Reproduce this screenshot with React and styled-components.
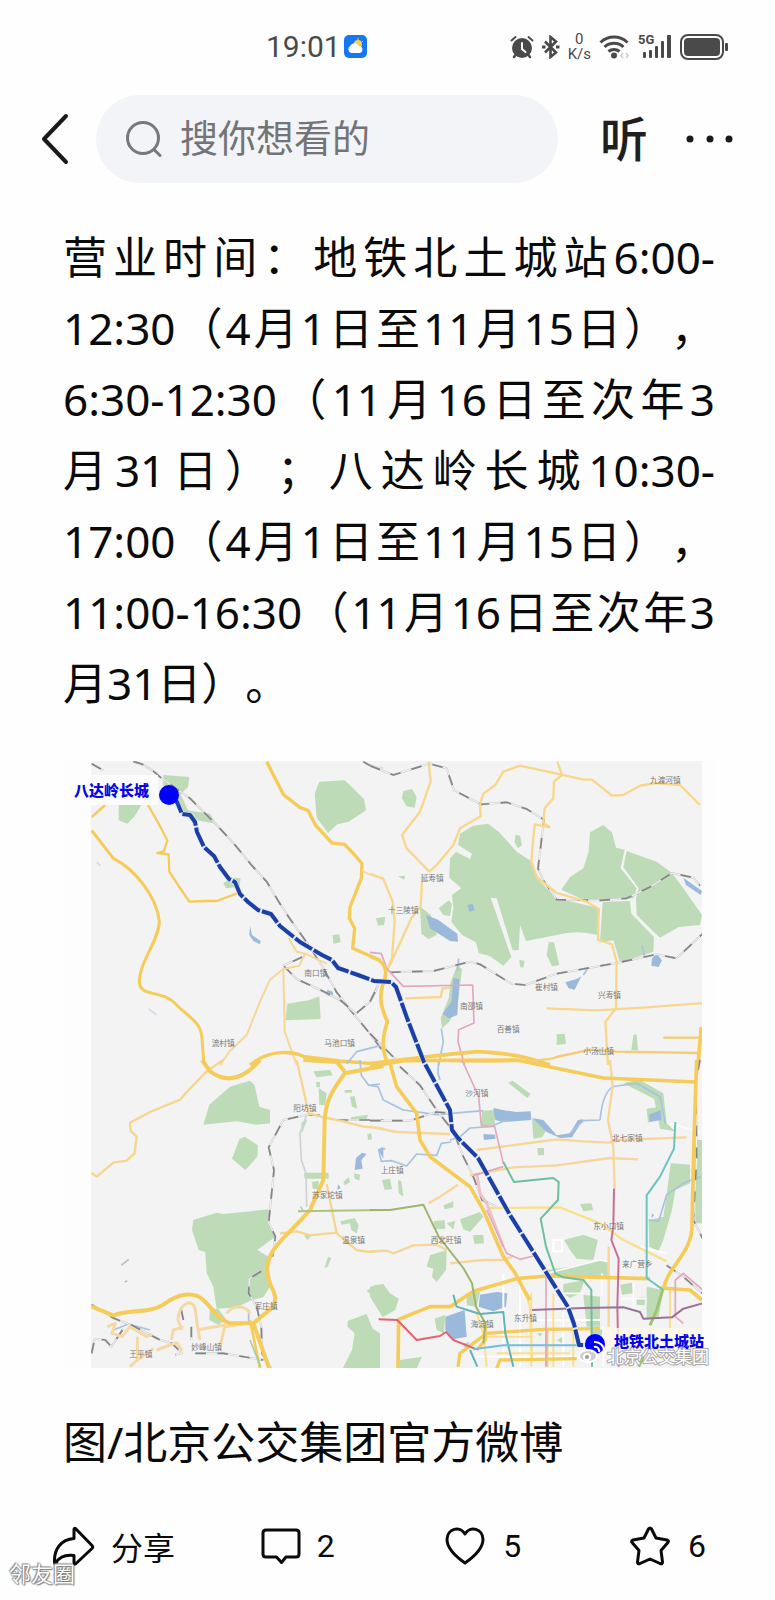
import React from "react";
import styled, { createGlobalStyle } from "styled-components";

const GlobalStyle = createGlobalStyle`
* {
  margin: 0;
  padding: 0;
  box-sizing: border-box;
}

body {
  background: #fefefe;
  color: #0a0a0a;
  font-family: Roboto, "Noto Sans CJK SC", sans-serif;
}

button {
  border: none;
  background: none;
  color: inherit;
  font-family: inherit;
  cursor: pointer;
}
`;

const Page = styled.div`
  position: relative;
  min-height: 1600px;
`;

const StatusBar = styled.div`
  display: flex;
  align-items: center;
  height: 95px;
  padding: 0 46px 2px 266px;
  color: #4a4a4a;
`;

const Clock = styled.span`
  font-size: 30px;
  line-height: 32px;
  margin-right: 3px;
`;

const StatusIcons = styled.div`
  display: flex;
  align-items: center;
  gap: 8px;
  margin-left: auto;
`;

const Speed = styled.div`
  font-size: 15px;
  line-height: 15px;
  text-align: center;
`;

const Header = styled.header`
  display: flex;
  align-items: center;
  padding: 0 41px 0 32px;
`;

const IconButton = styled.button`
  display: flex;
  align-items: center;
  justify-content: center;
  height: 88px;
`;

const BackButton = styled(IconButton)`
  width: 44px;
`;

const ListenButton = styled(IconButton)`
  width: 48px;
  margin-left: 42px;
  padding-bottom: 6px;
  font-size: 48px;
  font-weight: 500;
  color: #1f1f1f;
`;

const MoreButton = styled(IconButton)`
  width: 48px;
  margin-left: 38px;
`;

const SearchBox = styled.label`
  display: flex;
  align-items: center;
  flex: 1;
  min-width: 0;
  height: 88px;
  margin-left: 20px;
  padding: 0 30px;
  gap: 18px;
  border-radius: 44px;
  background: #f3f4f7;
`;

const SearchInput = styled.input`
  flex: 1;
  min-width: 0;
  height: 60px;
  border: none;
  outline: none;
  background: none;
  font-family: inherit;
  font-size: 38px;
  color: #1f1f1f;

  &::placeholder {
    color: #737477;
    opacity: 1;
  }
`;

const Article = styled.article`
  padding: 39px 60px 0 63px;
  font-family: "Noto Sans", "Noto Sans CJK SC", sans-serif;
  font-size: 44px;
  line-height: 71px;
  text-spacing-trim: space-all;
`;

const Line = styled.span`
  display: block;
  white-space: nowrap;
  text-align: justify;
  text-align-last: ${(props) => (props.$last ? "left" : "justify")};
`;

const Figure = styled.figure`
  margin-top: 42px;
`;

const MapSvg = styled.svg`
  display: block;
  width: 100%;
  height: auto;
`;

const Caption = styled.figcaption`
  margin-top: 38px;
`;

const ActionBar = styled.footer`
  display: grid;
  grid-template-columns: 210fr 185fr 185fr 75fr;
  align-items: center;
  padding: 37px 69px 0 51px;
`;

const ActionButton = styled.button`
  display: flex;
  align-items: center;
  gap: ${(props) => props.$gap || 16}px;
  height: 62px;
  font-size: 32px;
  white-space: nowrap;
`;

const Watermark = styled.span`
  position: absolute;
  left: 9px;
  bottom: 10px;
  font-size: 22px;
  line-height: 30px;
  color: #fff;
  text-shadow: 0 0 1px #666, 0 0 2px #777, 1px 1px 1px #888, -1px -1px 1px #aaa;
`;

const lines = [
  "营业时间：地铁北土城站6:00-",
  "12:30（4月1日至11月15日），",
  "6:30-12:30（11月16日至次年3",
  "月31日）；八达岭长城10:30-",
  "17:00（4月1日至11月15日），",
  "11:00-16:30（11月16日至次年3",
  "月31日）。",
];

function WeatherIcon() {
  return (
    <svg width="23" height="23" viewBox="0 0 23 23">
      <rect width="23" height="23" rx="5" fill="#1677f3" />
      <circle cx="14" cy="9" r="4" fill="#fbd04a" />
      <path d="M14 3v2M19 6l-1 1" stroke="#fbd04a" />
      <path d="M7 18a4 4 0 0 1-1-7 5 5 0 0 1 9 0 3.600 3.600 0 0 1 1 7z" fill="#fff" />
    </svg>
  );
}

function AlarmIcon() {
  return (
    <svg width="24" height="24" viewBox="0 0 24 24" fill="none" stroke="#4a4a4a" strokeLinecap="round">
      <circle cx="12" cy="13" r="10" fill="#4a4a4a" stroke="none" />
      <path d="M1.500 5.500l4-3.500M22.500 5.500l-4-3.500" strokeWidth="2" />
      <path d="M5.500 20l-1.500 2M18.500 20l1.500 2" strokeWidth="2.500" />
      <path d="M12 8v6l3.500 3" stroke="#fff" strokeWidth="2" />
    </svg>
  );
}

function BluetoothIcon() {
  return (
    <svg width="18" height="24" viewBox="0 0 18 24" fill="none" stroke="#4a4a4a" strokeWidth="2.600">
      <path d="M3 6.500l11 11-5.500 4.500V2L14 6.500l-11 11" />
      <path d="M0 12h3.500M14 12h3.500" strokeWidth="3" />
    </svg>
  );
}

function WifiIcon() {
  return (
    <svg width="31" height="24" viewBox="0 0 31 24" fill="none" stroke="#4a4a4a" strokeWidth="3">
      <path d="M1.500 7.500a19.500 19.500 0 0 1 27 0" />
      <path d="M5.500 12a14 14 0 0 1 19 0" />
      <path d="M9.500 16.500a8.500 8.500 0 0 1 11 0" />
      <circle cx="15" cy="20.500" r="3" fill="#4a4a4a" stroke="none" />
      <path d="M24 18l-2 2.500 2 2.500M27 18l2 2.500-2 2.500" stroke="#ccc" strokeWidth="1.500" />
    </svg>
  );
}

function SignalIcon() {
  return (
    <svg width="34" height="25" viewBox="0 0 34 25" fill="#4a4a4a">
      <text x="0" y="10" fontSize="13" fontWeight="700" fontFamily="Roboto, sans-serif">
        5G
      </text>
      <rect x="5" y="18" width="3" height="6" rx="1" />
      <rect x="11" y="16" width="3" height="8" rx="1" />
      <rect x="17" y="12" width="3" height="12" rx="1" />
      <rect x="23" y="7" width="3" height="17" rx="1" />
      <rect x="29" y="1" width="4" height="23" rx="1" />
    </svg>
  );
}

function BatteryIcon() {
  return (
    <svg width="49" height="26" viewBox="0 0 49 26" fill="none">
      <rect x="1" y="1" width="42" height="24" rx="7" stroke="#4a4a4a" strokeWidth="2" />
      <rect x="4" y="4" width="36" height="18" rx="4" fill="#4a4a4a" />
      <rect x="45" y="9" width="3" height="8" rx="1" fill="#4a4a4a" />
    </svg>
  );
}

function BackIcon() {
  return (
    <svg width="30" height="52" viewBox="0 0 30 52" fill="none" stroke="#1a1a1a" strokeWidth="4" strokeLinecap="round" strokeLinejoin="round">
      <path d="M27 3L5 26l22 23" />
    </svg>
  );
}

function SearchIcon() {
  return (
    <svg width="36" height="36" viewBox="0 0 36 36" fill="none" stroke="#77787b" strokeWidth="3" strokeLinecap="round">
      <circle cx="17" cy="17" r="15.500" />
      <path d="M28 28.500l6 6" />
    </svg>
  );
}

function DotsIcon() {
  return (
    <svg width="48" height="8" viewBox="0 0 48 8" fill="#1a1a1a">
      <circle cx="4" cy="4" r="3.500" />
      <circle cx="24" cy="4" r="3.500" />
      <circle cx="43" cy="4" r="3.500" />
    </svg>
  );
}

const ActionSvg = styled.svg`
  fill: none;
  stroke: #0a0a0a;
  stroke-width: 3;
  stroke-linecap: round;
  stroke-linejoin: round;
`;

function ShareIcon() {
  return (
    <ActionSvg width="44" height="40" viewBox="0 0 44 40">
      <path d="M23 3.500Q23 1.500 25 3L41 19.500Q42.500 21 41 22.500L25 37.500Q23 39 23 37V29.500C14 28.500 8 31 5 37Q3.500 39 3.500 36C3 23 10 13.500 23 12.500z" />
    </ActionSvg>
  );
}

function CommentIcon() {
  return (
    <ActionSvg width="40" height="38" viewBox="0 0 40 38">
      <path d="M5 3H35Q38 3 38 6V27Q38 30 35 30H25L20.500 35.500L15.500 30H5Q2 30 2 27V6Q2 3 5 3z" />
    </ActionSvg>
  );
}

function HeartIcon() {
  return (
    <ActionSvg width="40" height="38" viewBox="0 0 40 38">
      <path d="M20 36C10 29 2 21 2 12.500C2 2 15-2 20 7C25-2 38 2 38 12.500C38 21 30 29 20 36z" />
    </ActionSvg>
  );
}

function StarIcon() {
  return (
    <ActionSvg width="40" height="40" viewBox="0 0 40 40">
      <path d="M18.500 3Q20 1 21.500 3L26 12L37 14Q39.500 15 37.500 17L31 24.500L32.500 36Q32.500 38.500 30 37.500L20 33L10 37.500Q7.500 38.500 7.500 36L9 24.500L2.500 17Q0.500 15 3 14L14 12z" />
    </ActionSvg>
  );
}

const Green = styled.path`
  fill: #bedbb8;
`;

const Water = styled.path`
  fill: #9bb9db;
`;

const Road = styled.path`
  fill: none;
  stroke: ${(props) => props.$color || "#f5cc59"};
  stroke-width: ${(props) => props.$w || 5};
  stroke-linejoin: round;
`;

const Stream = styled(Road)`
  stroke: #a9c2de;
  stroke-width: 5;
`;

const Place = styled.text`
  fill: #777;
  font-size: 23px;
`;

const StopName = styled.text`
  fill: #0505e6;
  font-weight: 900;
`;

function Rail({ d }) {
  return (
    <>
      <Road $color="#c9c9c9" $w={6} d={d} />
      <Road $color="#f7f7f7" $w={3} d={d} />
      <Road $color="#858585" $w={5} strokeDasharray="32 34" d={d} />
    </>
  );
}

function NorthWest() {
  return (
    <g transform="translate(50 755) scale(.33333)">
      <Green d="M340 60L418 66 414 96 392 118 414 166 480 176 498 206 440 196 408 180 382 144 340 100z" />
      <Green d="M206 150H274L254 184 232 206 206 196z" />
      <Green d="M808 80L884 76 942 132 948 166 896 200 862 208 834 234 800 188 794 116z" />
      <Green d="M520 384L546 368 572 370 568 396 528 400z" />
      <Green d="M848 540L868 538 872 562 850 566z" />
      <Green d="M712 746L776 736 808 724 812 792 706 796z" />
      <Green d="M980 492L1000 486 1000 510z" />
      <Water d="M600 512L606 540 632 558 630 568 610 558 598 540z" />
      <Water d="M832 704L848 710 850 726 830 720z" />
      <Road $color="#d5dceb" d="M140 322L152 332M296 762L320 780" />
      <Rail d="M125 26L160 46M250 20Q290 26 330 66L420 130 500 210 550 264 606 332 650 380 686 440 720 492 776 570 820 640 860 712 910 776 960 836 1000 890" />
      <Rail d="M757 606L700 632 740 672 830 714 874 738 918 776 960 740 985 690" />
      <Rail d="M940 20Q964 38 1000 40" />
      <Road $w={7} d="M125 186L166 150M294 150L326 206 352 256 342 288 322 294 356 298 358 350 388 396 418 440 468 438 500 438 560 416" />
      <Road $w={9} d="M125 226L190 310C250 340 320 420 328 500C326 560 268 620 268 680C270 730 336 700 380 750C420 790 452 800 456 850L462 930" />
      <Road $w={10} d="M650 20L666 52 700 118 750 158 774 166 796 210 846 264 884 268 914 300 936 326 934 370 900 456 898 490 914 520 908 580 990 616" />
      <Road $color="#f5d797" d="M936 346Q966 366 1000 368" />
      <Road $color="#f5d797" $w={6} d="M716 550L740 590 766 596 748 632 700 642 660 674 630 740 590 840 540 888 510 930M700 644L704 830 740 930M766 596L830 626" />
      <Road $w={10} d="M600 930C660 880 730 890 760 904L870 918 1000 928" />
      <Stream d="M890 926L920 890 990 872" />
      <Place x="763" y="664">南口镇</Place>
      <Place x="485" y="873">流村镇</Place>
      <Place x="823" y="873">马池口镇</Place>
    </g>
  );
}

function NorthEast() {
  return (
    <g transform="translate(370 755) scale(.33333)">
      <Green d="M100 108L126 102 140 126 134 158 110 154 96 130z" />
      <Green d="M310 212L354 206 386 230 440 290 480 316 500 370 560 430 690 460 682 540 Q620 524 560 540L468 558 450 510 446 586 428 586 380 430 362 428 424 606 400 632 360 604 326 594 318 562 276 540 244 500 250 460 246 420 274 400 238 368 240 310 258 290 300 312 306 296 264 270 270 236z" />
      <Green d="M660 232L700 210 726 232 738 278 764 284 752 340 800 400 790 430 700 436 640 434 574 404 600 366 640 340 656 290z" />
      <Green d="M770 288L860 320 906 354 940 400 996 480 990 510 926 516 870 548 840 520 800 480 798 430 806 400 760 336z" />
      <Green d="M698 440L780 438 784 476 852 546 850 590 750 622 730 556 690 562z" />
      <Green d="M436 240L450 242 456 270 444 280 434 262z" />
      <Green d="M206 460L236 436 246 446 240 484 220 480z" />
      <Green d="M150 454L182 480 196 520 200 540 176 552 154 536z" />
      <Green d="M536 562H552L568 630 546 634 530 600z" />
      <Green d="M18 490L46 486 42 510 24 512zM84 364L106 362 102 374zM448 614L464 618 460 638 450 636zM560 838L584 836 588 866 560 870zM790 840L800 838 804 886 784 886z" />
      <Green d="M262 630L276 642 262 760 238 800 216 820 212 790 236 730 242 680z" />
      <Water d="M168 480L204 494 262 536 264 560 240 558 180 520z" />
      <Water d="M292 450L308 446 314 466 298 470z" />
      <Water d="M250 670L268 672 262 780 236 790 218 776 244 740z" />
      <Water d="M846 610L860 596 876 616 866 636 844 632zM586 682L620 672 634 664 614 704 596 700zM940 368L996 408 992 420 948 390z" />
      <Stream d="M266 610L262 650M214 820L220 860 206 930M816 570L824 606M640 660L652 642" />
      <Rail d="M0 32L70 60 178 26 230 40 252 106 334 148 410 142 470 162 522 194 504 340 520 376 560 434 690 436 770 430 840 396 906 354 970 368 990 392" />
      <Rail d="M60 652L190 648 300 620 330 628 424 686 466 690 560 656 740 624 860 598 920 610 998 536" />
      <Rail d="M0 740L24 694M0 836L80 916" />
      <Road $color="#f8d68b" $w={7} d="M176 20L182 80 150 170 96 240 110 280 178 350 200 330 250 270 270 220 332 184 330 148 340 116 376 90 400 50 450 32 560 56 640 74 666 74 726 122 760 120 810 92 860 84 930 90 990 150M562 20L576 60 552 80 550 130 524 160 520 204 538 216 494 208 484 318 500 366 560 414 650 440 686 462 684 554 726 568 740 620 738 760 706 800 714 930" />
      <Road $color="#f8d68b" $w={7} d="M0 356L40 372 68 440 74 500 66 610 50 650M156 380L152 454 124 490 60 630M530 760L680 766 820 758 1000 744M106 730L212 726 218 700 240 698" />
      <Road $color="#e4a5c1" d="M0 592L34 596 50 640 100 694 308 690 312 804 266 824 264 860 284 930" />
      <Road $w={11} d="M0 604C40 616 60 640 38 690C24 740 40 770 52 800C36 850 36 880 50 918" />
      <Road $w={11} d="M0 926C120 912 200 900 320 890C420 894 470 906 540 930" />
      <Road $color="#f5cc76" $w={7} d="M240 918Q520 924 560 906L660 884 740 890 990 894M880 848H990" />
      <Road $w={11} d="M994 816L984 930" />
      <Place x="840" y="85">九渡河镇</Place>
      <Place x="152" y="377">延寿镇</Place>
      <Place x="54" y="475">十三陵镇</Place>
      <Place x="495" y="706">崔村镇</Place>
      <Place x="684" y="728">兴寿镇</Place>
      <Place x="270" y="762">南邵镇</Place>
      <Place x="380" y="831">百善镇</Place>
      <Place x="640" y="896">小汤山镇</Place>
    </g>
  );
}

function SouthWest() {
  return (
    <g transform="translate(50 1060) scale(.33333)">
      <Green d="M478 134L540 80 600 62 614 76 628 140 660 150 660 190 618 194 560 184 460 194z" />
      <Green d="M568 238L584 230 624 256 622 290 586 330 546 296z" />
      <Green d="M430 480L500 458 520 462 656 448 658 490 676 530 622 570 656 590 650 630 660 680 640 712 606 720 560 742 500 746 490 680 470 640 466 576 446 570 426 510z" />
      <Green d="M480 744L506 748 530 780 504 794 478 780zM894 782L950 762 968 806 990 820V926H878L906 870 914 820 892 800zM950 692L976 674 1000 674V740z" />
      <Green d="M790 34L840 30 848 46 800 52zM762 338H836V356H764zM786 366L806 362 806 388 788 386zM872 484L914 474 926 496 920 520 904 510 900 490 874 494zM824 622L834 590 844 594 832 622z" />
      <Green d="M806 84L830 100 826 136 808 134zM884 90H906V98H884zM900 110L914 108 922 146 906 140zM902 172L954 164 950 180 904 182zM952 222L964 220 966 238 954 240zM880 366L896 352 900 366 884 376zM912 340L930 344 928 362 914 356zM754 188L772 178 756 220zM762 526H786L772 540zM798 66H810V82H800z" />
      <Water d="M918 294L936 278 950 282 934 300 938 326 914 330zM864 372L872 384 862 390zM984 268L1000 260V296z" />
      <Road $color="#b6bfc9" d="M214 616L236 598M224 666L232 662" />
      <Stream d="M930 0L934 46 956 76 990 72M190 810L236 792 300 810M596 750V790" />
      <Rail d="M810 166L770 164 700 180 656 262 672 330 656 488 676 530 668 590M634 634L598 656 596 700 620 740 634 800 636 880 664 926" />
      <Road $color="#cfd2d4" d="M770 164L750 220 754 300 768 340 770 440" />
      <Rail d="M125 734L190 774 250 798 330 840 366 850 396 880 376 884M125 880L134 836 166 840 184 860 220 806M436 880L520 880 640 900M400 780L394 750M424 800V840" />
      <Rail d="M862 180H1000" />
      <Road $color="#f5d68f" $w={7} d="M520 0L470 34 410 96 392 118 300 156 240 188 242 212 260 230 254 280 230 302 190 308 140 350 125 338M740 0L776 160 830 174 880 184 940 200 1000 206M830 372L860 520 920 570 960 576 1000 572M690 520L740 514 780 526 860 518" />
      <Road $color="#f5d9a5" $w={9} d="M396 810L384 780C384 730 430 710 436 750L444 810 450 840M364 840L370 810 400 800M320 870L380 848 396 872M510 860L524 800 580 792M440 810L530 794M530 760C550 730 590 740 600 760M172 800L196 790 186 820 216 830 240 800 290 830 306 824M262 830V900L240 920M262 900L310 866" />
      <Road $w={12} d="M125 740L190 766C240 748 300 760 340 734C380 704 430 690 460 720C490 748 506 780 540 790L610 790 658 926M610 790L670 740C690 690 650 690 652 620C660 560 700 540 780 450L820 360 824 180C830 110 850 90 884 40L1000 18M456 0L480 34C530 70 580 60 630 0M760 0L860 6 884 34" />
      <Road $w={8} d="M600 780L630 926" />
      <Road $color="#acc579" $w={6} d="M744 454L1000 450" />
      <Road $color="#a6cfa9" d="M752 440L760 454M600 840L632 920" />
      <Place x="730" y="154">阳坊镇</Place>
      <Place x="786" y="414">苏家坨镇</Place>
      <Place x="876" y="549">温泉镇</Place>
      <Place x="614" y="747">军庄镇</Place>
      <Place x="424" y="870">妙峰山镇</Place>
      <Place x="238" y="892">王平镇</Place>
    </g>
  );
}

function SouthEast() {
  return (
    <g transform="translate(370 1060) scale(.33333)">
      <Green d="M414 68L428 62 482 102 472 114zM336 152L376 150 374 194 334 196zM486 176L530 210 516 232 490 236zM760 70L806 58 880 100 890 190 916 214 870 206 862 160 852 116z" />
      <Green d="M902 310L960 314 960 370 916 390 906 450 880 540 866 574 838 560 836 480 880 470 890 404zM976 240H998V490H976z" />
      <Green d="M582 540L640 524 684 540 670 600 620 596 600 570zM530 630L600 620 690 600 716 606V650H550zM180 586L230 570 228 630 200 666 186 650 190 626 170 620z" />
      <Green d="M0 680L40 672 60 700 86 716 76 750 38 772 0 710zM0 792L26 850 20 920H0zM36 360L60 356 66 388 44 390zM84 360L94 364 100 410 86 400zM190 484L224 480 226 506 196 508zM230 490L256 482 250 508zM270 478L330 456 340 470 300 516 280 508z" />
      <Green d="M308 526L340 524 342 550 314 552zM220 436L250 424 250 442 224 448zM630 432L664 430 670 450 640 454zM750 674L786 668 790 700 756 704zM800 714L826 710 824 736 800 734zM580 672L644 660 630 700 600 714 580 700zM640 704L690 710V800H650zM194 776L226 764 222 820 200 810zM290 700L330 696 320 740 290 736zM90 900L156 890 140 926H90zM830 680L880 690 866 770 830 780z" />
      <Green d="M830 146L870 140 876 170 834 188zM502 264H522V286H504zM660 800L700 810 690 836 664 830zM560 840L580 830 576 850zM280 850L300 846 286 870zM500 820L516 820 512 830z" />
      <Water d="M370 144L410 152 440 156 482 154 484 180 400 186 376 180zM486 174L520 180 560 226 600 220 624 180 640 178 606 232 570 234 530 216z" />
      <Water d="M226 770L284 750 290 830 250 838 226 810zM330 704L380 696 412 700 408 740 370 754 326 740zM836 164L872 150 874 180 840 186zM846 460L852 466 844 474zM340 222L376 224V236L342 240z" />
      <Stream d="M0 76L24 80 40 120 100 150 200 164 340 152M690 180Q700 80 740 78L800 70 870 110 886 190M600 220L640 182 690 180M206 0L204 40 210 60M240 240L270 230 300 204 360 200 410 180M46 266L26 270 34 304 66 302 110 318 140 282 200 286 214 250 244 246M836 480L866 484 890 404 940 370 990 350" />
      <Road $color="#fcfcfc" $w={5} d="M900 190L990 216M530 640L690 600 716 606M696 640V710M750 716H830M790 670V750M560 700H640M660 850H700M810 560L890 580" />
      <Road $color="#fff" $w={6} d="M400 640V920M450 660V920M580 700V920M700 800V920M500 780H690M320 890H620M690 860H990M550 540H576V574H550z" />
      <Road $color="#fae08e" $w={6} d="M320 760L340 820 350 920M484 700V920M550 700V920M610 800V920M780 830V920M900 680V820M380 880H600M350 830H480" />
      <Rail d="M90 20L150 76 200 150 250 214 280 290 310 350 336 420 380 440" />
      <Rail d="M0 182L120 182 200 156 246 160" />
      <Rail d="M990 0L978 60 980 300 970 480 998 536M890 616L940 650 996 700" />
      <Road $color="#f7d59b" $w={7} d="M0 200L80 216 240 222M320 270L500 246 560 238 640 244 720 248 740 240 950 232M300 346L430 322 560 316 720 294 804 298M176 430L210 410 264 374M0 574L50 572 70 580 130 556 200 554 230 570M240 610L340 600 400 600 430 588M720 0L728 80 714 180 730 260 734 390M716 560V800" />
      <Road $color="#f8e08d" $w={7} d="M360 444L570 442 690 490 760 540 890 604M460 680L480 740 486 900" />
      <Road $w={11} d="M60 10L80 80 140 160 150 240 180 290 300 380 340 450 400 590 436 640 462 690 480 720M0 20L100 2 440 0 700 54 980 66M980 0L972 240 966 490C970 580 890 620 880 690" />
      <Road $w={11} d="M84 926L86 778 180 740 240 740 310 694 440 656 530 648 840 656M870 684L960 690 996 720" />
      <Road $w={10} d="M350 820L520 808 690 806M350 820L270 880 264 920M530 810V920M380 926L390 900 620 896M346 796V840L320 870" />
      <Road $color="#eec2cc" $w={9} d="M320 340L330 400 350 430 400 560" />
      <Road $color="#e2a9bd" d="M276 0L326 110 334 196 374 200 400 310M310 346L400 320M350 450L410 580 450 598 490 588M528 650V920M998 690L940 640 916 660 916 770 940 790" />
      <Road $color="#6ebf9d" $w={6} d="M400 306L432 366 550 354 566 366 564 420 512 476 528 560 556 640 580 652 640 660 664 690 666 920" />
      <Road $color="#66c6bd" $w={6} d="M916 186L912 266 870 350 830 406 830 654 880 690" />
      <Road $color="#9fc56f" $w={9} d="M878 690L860 750 840 796M820 890L806 920" />
      <Road $color="#9eb56d" $w={6} d="M0 450H60L160 434 206 530 280 624 306 670 318 740 346 790 340 850" />
      <Road $color="#61b3b7" $w={6} d="M250 704L260 740 330 762 400 756 406 820 430 920M300 870L322 920" />
      <Road $color="#cb6e95" $w={6} d="M732 386L730 500 724 540 746 596 742 740 746 920" />
      <Road $color="#9b7398" $w={6} d="M486 750L640 744 760 742 810 756 820 776 906 772 940 746 998 730" />
      <Road $color="#e26470" $w={6} d="M26 778L82 780 140 840 210 828 228 816 250 840 320 868" />
      <Road $color="#72bedb" $w={6} d="M310 868L400 856 640 856" />
      <Place x="286" y="107">沙河镇</Place>
      <Place x="726" y="244">北七家镇</Place>
      <Place x="32" y="340">上庄镇</Place>
      <Place x="670" y="507">东小口镇</Place>
      <Place x="182" y="549">西北旺镇</Place>
      <Place x="756" y="622">来广营乡</Place>
      <Place x="432" y="782">东升镇</Place>
      <Place x="302" y="802">海淀镇</Place>
    </g>
  );
}

// bus route from the Great Wall stop down to the subway station
const route =
  "M170 797L177 802 182 814 190 815 195 822 197 832 204 847 214 856 220 867 229 879 235 882 240 894 248 902 258 910 271 914 280 926 300 942 322 955 332 960 338 968 358 975 374 981 391 982 396 987 407 1018 424 1062 450 1110 452 1130 458 1138 478 1158 510 1215 568 1307 574 1324 579 1345 592 1345";

function RouteMap() {
  return (
    <MapSvg viewBox="63 761 652 608" role="img" aria-label="八达岭长城 - 地铁北土城站">
      <clipPath id="map-area">
        <rect x="91" y="761" width="611" height="607" />
      </clipPath>
      <rect x="62" y="761" width="653" height="608" fill="#fdfdfd" />
      <g clipPath="url(#map-area)">
        <rect x="91" y="761" width="611" height="607" fill="#f3f3f3" />
        <NorthWest />
        <NorthEast />
        <SouthWest />
        <SouthEast />
        <g fill="none" strokeLinejoin="round">
          <path d={route} stroke="#dfe6f7" strokeWidth="5" />
          <path d={route} stroke="#1c3fa5" strokeWidth="4" strokeDasharray="20 2" />
        </g>
      </g>
      <path d="M62 775H158V805H62z" fill="#fdfdfd" opacity=".85" />
      <path d="M605 1328H702V1352H605z" fill="#fdf9e8" opacity=".8" />
      <circle cx="169" cy="795" r="10" fill="#0000fb" />
      <circle cx="595" cy="1344" r="10" fill="#0000fb" />
      <StopName x="74" y="796" fontSize="15">
        八达岭长城
      </StopName>
      <StopName x="614" y="1347" fontSize="15">
        地铁北土城站
      </StopName>
      <g fill="none" stroke="#fff" strokeWidth="2">
        <ellipse cx="588" cy="1356" rx="9" ry="6" fill="#cfcfcf" />
        <circle cx="587" cy="1357" r="3" fill="#999" />
        <path d="M594 1342a9 9 0 0 1 10 9M594 1347a4 4 0 0 1 5 5" />
      </g>
      <text x="607" y="1363" fontSize="17" fill="#fff" stroke="#aaa" strokeWidth="2" paintOrder="stroke">
        北京公交集团
      </text>
    </MapSvg>
  );
}

export default function App() {
  return (
    <Page lang="zh-CN">
      <GlobalStyle />
      <StatusBar>
        <Clock>19:01</Clock>
        <WeatherIcon />
        <StatusIcons>
          <AlarmIcon />
          <BluetoothIcon />
          <Speed>
            0<br />
            K/s
          </Speed>
          <WifiIcon />
          <SignalIcon />
          <BatteryIcon />
        </StatusIcons>
      </StatusBar>

      <Header>
        <BackButton aria-label="返回">
          <BackIcon />
        </BackButton>
        <SearchBox>
          <SearchIcon />
          <SearchInput type="text" placeholder="搜你想看的" aria-label="搜索" />
        </SearchBox>
        <ListenButton>听</ListenButton>
        <MoreButton aria-label="更多">
          <DotsIcon />
        </MoreButton>
      </Header>

      <Article>
        <p>
          {lines.map((line, i) => (
            <Line key={i} $last={i === lines.length - 1}>
              {line}
            </Line>
          ))}
        </p>
        <Figure>
          <RouteMap />
          <Caption>图/北京公交集团官方微博</Caption>
        </Figure>
      </Article>

      <ActionBar>
        <ActionButton>
          <ShareIcon />
          分享
        </ActionButton>
        <ActionButton aria-label="评论 2">
          <CommentIcon />2
        </ActionButton>
        <ActionButton $gap={18} aria-label="点赞 5">
          <HeartIcon />5
        </ActionButton>
        <ActionButton $gap={18} aria-label="收藏 6">
          <StarIcon />6
        </ActionButton>
      </ActionBar>
      <Watermark>邻友圈</Watermark>
    </Page>
  );
}
